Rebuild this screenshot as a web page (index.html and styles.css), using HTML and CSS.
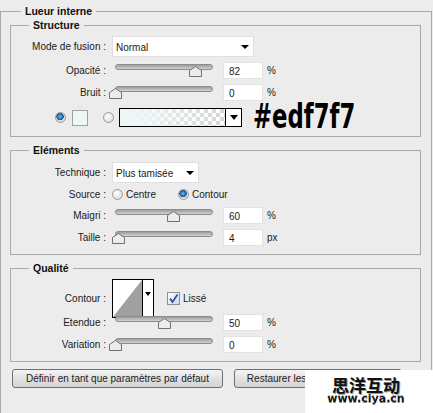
FILE: index.html
```html
<!DOCTYPE html>
<html lang="fr">
<head>
  <meta charset="UTF-8">
  <title>Lueur interne</title>
  <link rel="stylesheet" href="styles.css">
</head>
<body>

  <fieldset class="panel">
    <legend>Lueur interne</legend>

    <fieldset class="group structure">
      <legend>Structure</legend>

      <div class="row first">
        <label>Mode de fusion :</label>
        <div class="select mode">Normal<span class="arrow"></span></div>
      </div>

      <div class="row">
        <label>Opacité :</label>
        <div class="ctrl">
          <div class="slider" style="--v:82"><span class="thumb"></span></div>
          <div class="field">82</div><span class="unit">%</span>
        </div>
      </div>

      <div class="row">
        <label>Bruit :</label>
        <div class="ctrl">
          <div class="slider" style="--v:0"><span class="thumb"></span></div>
          <div class="field">0</div><span class="unit">%</span>
        </div>
      </div>

      <div class="colors">
        <span class="radio on"></span>
        <span class="swatch"></span>
        <span class="radio"></span>
        <div class="gradient"><span class="grad-arrow"></span></div>
        <span class="hex">#edf7f7</span>
      </div>
    </fieldset>

    <fieldset class="group elements">
      <legend>Eléments</legend>

      <div class="row first">
        <label>Technique :</label>
        <div class="select technique">Plus tamisée<span class="arrow"></span></div>
      </div>

      <div class="row source">
        <label>Source :</label>
        <div class="choices">
          <span class="radio"></span><span class="choice">Centre</span>
          <span class="radio on"></span><span class="choice">Contour</span>
        </div>
      </div>

      <div class="row">
        <label>Maigri :</label>
        <div class="ctrl">
          <div class="slider" style="--v:60"><span class="thumb"></span></div>
          <div class="field">60</div><span class="unit">%</span>
        </div>
      </div>

      <div class="row">
        <label>Taille :</label>
        <div class="ctrl">
          <div class="slider" style="--v:4"><span class="thumb"></span></div>
          <div class="field">4</div><span class="unit">px</span>
        </div>
      </div>
    </fieldset>

    <fieldset class="group quality">
      <legend>Qualité</legend>

      <div class="row first contour-row">
        <label>Contour :</label>
        <div class="choices">
          <svg class="curve" width="42" height="39" viewBox="0 0 42 39">
            <rect x="0.5" y="0.5" width="41" height="38" fill="#fff" stroke="#000"/>
            <polygon points="1,38 30,1 30,38" fill="#a0a0a0"/>
            <line x1="30.5" y1="0" x2="30.5" y2="39" stroke="#000"/>
            <polygon points="33,13 39,13 36,17" fill="#000"/>
          </svg>
          <svg class="check" width="13" height="13" viewBox="0 0 13 13">
            <defs>
              <linearGradient id="cb" x1="0" y1="0" x2="1" y2="1">
                <stop offset="0" stop-color="#ffffff"/>
                <stop offset="1" stop-color="#c9d8e8"/>
              </linearGradient>
            </defs>
            <rect x="0.5" y="0.5" width="12" height="12" fill="url(#cb)" stroke="#8f8f8f"/>
            <path d="M3 6.5 L5.5 10 L10.5 2.5" fill="none" stroke="#2a4fa8" stroke-width="1.8"/>
          </svg>
          <span class="choice">Lissé</span>
        </div>
      </div>

      <div class="row tight">
        <label>Etendue :</label>
        <div class="ctrl">
          <div class="slider" style="--v:50"><span class="thumb"></span></div>
          <div class="field">50</div><span class="unit">%</span>
        </div>
      </div>

      <div class="row">
        <label>Variation :</label>
        <div class="ctrl">
          <div class="slider" style="--v:0"><span class="thumb"></span></div>
          <div class="field">0</div><span class="unit">%</span>
        </div>
      </div>
    </fieldset>

    <div class="buttons">
      <button class="btn wide">Définir en tant que paramètres par défaut</button>
      <button class="btn">Restaurer les valeurs par défaut</button>
    </div>
  </fieldset>

  <div class="watermark">
    <div class="wm-cn">思洋互动</div>
    <div class="wm-url">www.ciya.cn</div>
  </div>

</body>
</html>
```

FILE: styles.css
```css
body {
  margin: 0;
  background: #ececec;
  font-family: "Liberation Sans", Arial, sans-serif;
  font-size: 10px;
  color: #1a1a1a;
  overflow: hidden;
}

fieldset {
  border: 1px solid #a9a9a9;
  padding: 0;
}

legend {
  font-weight: bold;
  font-size: 10.5px;
  line-height: 14px;
  padding: 0 4px;
  color: #111;
}

.panel {
  margin: 4px 1px 0 0;
  padding-bottom: 40px;
}

.panel > legend {
  margin-left: 20px;
}

.group {
  margin: 0 10px 0 9px;
  padding-bottom: 8px;
}

.group > legend {
  margin-left: 18px;
}

.elements,
.quality {
  margin-top: 6px;
}

.structure {
  padding-bottom: 9px;
}

.row {
  display: grid;
  grid-template-columns: 95px 1fr;
  column-gap: 6px;
  align-items: center;
  margin-top: 5px;
}

.row.first {
  margin-top: 4px;
}

.elements .row.first {
  margin-top: 5px;
}

.row.tight {
  margin-top: -4px;
}

.row label {
  text-align: right;
  white-space: nowrap;
}

.select {
  position: relative;
  height: 21px;
  line-height: 21px;
  background: #fff;
  border: 1px solid #e0e0e0;
  box-sizing: border-box;
  padding-left: 3px;
}

.select.mode {
  width: 142px;
}

.select.technique {
  width: 87px;
}

.arrow {
  position: absolute;
  right: 4px;
  top: 8px;
  border-left: 4px solid transparent;
  border-right: 4px solid transparent;
  border-top: 4px solid #000;
}

.ctrl {
  display: flex;
  align-items: center;
  height: 17px;
}

.slider {
  position: relative;
  width: 98px;
  height: 17px;
  margin: 0 10px 0 3px;
}

.slider::before {
  content: "";
  position: absolute;
  left: 0;
  right: 0;
  top: 2px;
  height: 4px;
  border: 1px solid #8c8c8c;
  border-radius: 3px;
  background: linear-gradient(#9c9c9c, #d2d2d2);
}

.thumb {
  position: absolute;
  top: 4px;
  left: calc(var(--v) * 0.98px - 6.5px);
  width: 13px;
  height: 11px;
  background: url("data:image/svg+xml,%3Csvg xmlns='http://www.w3.org/2000/svg' width='13' height='11'%3E%3Cpolygon points='0.5,4.5 6.5,0.5 12.5,4.5 12.5,10.5 0.5,10.5' fill='%23ececec' stroke='%23707070'/%3E%3C/svg%3E");
}

.field {
  width: 40px;
  height: 17px;
  line-height: 17px;
  box-sizing: border-box;
  background: #fff;
  border: 1px solid #e2e2e2;
  padding-left: 5px;
}

.unit {
  margin-left: 4px;
}

.colors {
  display: flex;
  align-items: center;
  height: 19px;
  margin: 7px 0 0 44px;
}

.radio {
  display: inline-block;
  width: 11px;
  height: 11px;
  border-radius: 50%;
  box-sizing: border-box;
  border: 1px solid #9a9a9a;
  background: radial-gradient(circle at 40% 35%, #ffffff, #d4d4d4);
}

.radio.on {
  background: radial-gradient(circle at 45% 40%, #7cc3f0 0, #1f6fb0 2.5px, #1d5a92 3.5px, #e6e6e6 4px, #c8c8c8 100%);
}

.swatch {
  width: 16px;
  height: 16px;
  box-sizing: border-box;
  border: 1px solid #a0a0a0;
  background: #edf7f7;
  margin: 0 15px 0 6px;
}

.gradient {
  position: relative;
  width: 123px;
  height: 19px;
  box-sizing: border-box;
  margin-left: 5px;
  border: 1px solid #000;
  background:
    linear-gradient(to right, #edf7f7 10%, rgba(237, 247, 247, 0) 85%),
    repeating-conic-gradient(#d6d6d6 0 25%, #ffffff 0 50%) 0 0 / 8px 8px;
}

.grad-arrow {
  position: absolute;
  right: -1px;
  top: -1px;
  width: 17px;
  height: 19px;
  box-sizing: border-box;
  border: 1px solid #000;
  background: #fff;
}

.grad-arrow::after {
  content: "";
  position: absolute;
  left: 4px;
  top: 6px;
  border-left: 4px solid transparent;
  border-right: 4px solid transparent;
  border-top: 5px solid #000;
}

.hex {
  display: inline-block;
  margin-left: 11px;
  font-family: "DejaVu Sans", sans-serif;
  font-weight: bold;
  font-size: 33px;
  line-height: 19px;
  color: #000;
  transform: scale(0.69, 1);
  transform-origin: left center;
  position: relative;
  top: -1px;
}

.choices {
  display: flex;
  align-items: center;
}

.choice {
  margin-left: 3px;
}

.source {
  height: 16px;
  margin-top: 3px;
}

.source .radio:nth-child(3) {
  margin-left: 22px;
}

.curve {
  display: block;
}

.check {
  margin-left: 13px;
}

.buttons {
  display: flex;
  gap: 11px;
  margin: 7px 0 0 11px;
}

.btn {
  height: 19px;
  padding: 0;
  font-family: inherit;
  font-size: 10px;
  color: #1a1a1a;
  border: 1px solid #6f6f6f;
  border-radius: 3px;
  background: linear-gradient(#f4f4f4, #e2e2e2 50%, #d3d3d3);
  width: 168px;
  white-space: nowrap;
  overflow: hidden;
}

.btn.wide {
  width: 211px;
}

.watermark {
  position: absolute;
  left: 305px;
  top: 370px;
  width: 128px;
  height: 43px;
  background: #fff;
  text-align: center;
  padding-right: 6px;
  box-sizing: border-box;
}

.wm-cn {
  margin-top: 6px;
  font-family: "Noto Sans CJK SC", sans-serif;
  font-weight: bold;
  font-size: 17px;
  line-height: 17px;
  color: #111;
  text-shadow: 1px 1px 0 #9a9a9a;
}

.wm-url {
  font-family: "DejaVu Sans", sans-serif;
  font-weight: bold;
  font-size: 11px;
  line-height: 12px;
  color: #111;
  text-shadow: 1px 0 0 #fff, -1px 0 0 #fff, 0 1px 0 #888, 0 -1px 0 #bbb;
}
```
